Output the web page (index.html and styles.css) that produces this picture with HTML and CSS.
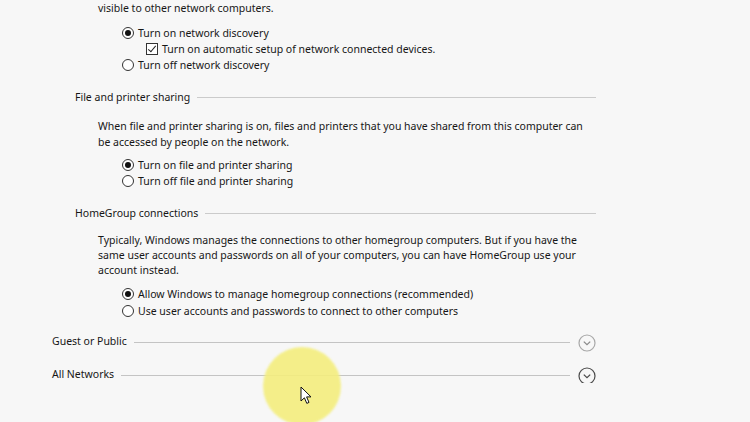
FILE: index.html
```html
<!DOCTYPE html>
<html>
<head>
  <title>Advanced sharing settings</title>
  <link rel="stylesheet" href="styles.css">
</head>
<body>
  <div class="page">
    <div class="block first">
      <p class="desc">When network discovery is on, this computer can see other network computers and devices and is<br>visible to other network computers.</p>
      <div class="options">
        <label class="opt"><span class="radio on"></span>Turn on network discovery</label>
        <label class="opt sub"><span class="check on"></span>Turn on automatic setup of network connected devices.</label>
        <label class="opt"><span class="radio"></span>Turn off network discovery</label>
      </div>
    </div>

    <div class="block">
      <div class="head">File and printer sharing</div>
      <p class="desc">When file and printer sharing is on, files and printers that you have shared from this computer can<br>be accessed by people on the network.</p>
      <div class="options">
        <label class="opt"><span class="radio on"></span>Turn on file and printer sharing</label>
        <label class="opt"><span class="radio"></span>Turn off file and printer sharing</label>
      </div>
    </div>

    <div class="block homegroup">
      <div class="head">HomeGroup connections</div>
      <p class="desc tight">Typically, Windows manages the connections to other homegroup computers. But if you have the<br>same user accounts and passwords on all of your computers, you can have HomeGroup use your<br>account instead.</p>
      <div class="options">
        <label class="opt"><span class="radio on"></span>Allow Windows to manage homegroup connections (recommended)</label>
        <label class="opt"><span class="radio"></span>Use user accounts and passwords to connect to other computers</label>
      </div>
    </div>

    <div class="profile">
      <span class="profile-name">Guest or Public</span>
      <span class="rule"></span>
      <svg class="expand" width="18" height="18" viewBox="0 0 18 18">
        <circle cx="9" cy="9" r="8" fill="none" stroke="#a8a8a8" stroke-width="1.2"/>
        <path d="M5.8 7.6 L9 10.6 L12.2 7.6" fill="none" stroke="#8a8a8a" stroke-width="1.3"/>
      </svg>
    </div>
    <div class="profile last">
      <span class="profile-name">All Networks</span>
      <span class="rule"></span>
      <svg class="expand" width="18" height="18" viewBox="0 0 18 18">
        <circle cx="9" cy="9" r="8" fill="none" stroke="#4a4a4a" stroke-width="1.2"/>
        <path d="M5.8 7.6 L9 10.6 L12.2 7.6" fill="none" stroke="#4a4a4a" stroke-width="1.3"/>
      </svg>
    </div>
  </div>

  <div class="highlight"></div>
  <svg class="cursor" width="14" height="20" viewBox="0 0 14 20">
    <path d="M1 1 L1 15 L4.4 11.8 L6.8 17.4 L9 16.4 L6.6 10.9 L11 10.9 Z" fill="#fff" stroke="#111" stroke-width="1" stroke-linejoin="round"/>
  </svg>
</body>
</html>
```

FILE: styles.css
```css
body {
  margin: 0;
  background-color: #f7f7f7;
  font-family: "Noto Sans", "Open Sans", sans-serif;
  font-size: 10.5px;
  color: #161616;
  overflow: hidden;
}

.page {
  width: 544px;
  margin-top: -16px;
  padding-left: 52px;
}

.block {
  padding-left: 23px;
}

.head {
  display: flex;
  align-items: center;
  height: 16px;
  line-height: 16px;
  margin-top: 16px;
}

.head::after {
  content: "";
  flex: 1;
  margin-left: 7px;
  border-top: 1px solid #cbcbcb;
}

.desc {
  margin: 13px 0 0 23px;
  line-height: 16px;
}

.first .desc {
  margin-top: 0;
}

.desc.tight {
  margin-top: 12px;
  line-height: 15px;
}

.options {
  margin: 7px 0 0 47px;
}

.first .options {
  margin-top: 9px;
}

.homegroup .options {
  margin-top: 8px;
}

.opt {
  display: flex;
  align-items: center;
  height: 16px;
}

.homegroup .opt + .opt {
  margin-top: 1px;
}

.opt.sub {
  margin-left: 24px;
}

.radio {
  width: 10px;
  height: 10px;
  border: 1px solid #333;
  border-radius: 50%;
  background: #fff;
  margin-right: 4px;
  position: relative;
  flex-shrink: 0;
}

.radio.on::after {
  content: "";
  position: absolute;
  left: 2px;
  top: 2px;
  width: 6px;
  height: 6px;
  border-radius: 50%;
  background: #111;
}

.check {
  width: 10px;
  height: 10px;
  border: 1px solid #333;
  background: #fff;
  margin-right: 4px;
  position: relative;
  flex-shrink: 0;
}

.check.on::after {
  content: "";
  position: absolute;
  left: 3px;
  top: 0px;
  width: 3px;
  height: 7px;
  border: solid #222;
  border-width: 0 1.5px 1.5px 0;
  transform: rotate(40deg);
}

.profile {
  display: flex;
  align-items: center;
  height: 18px;
  margin-top: 13px;
}

.profile.last {
  margin-top: 15px;
}

.rule {
  flex: 1;
  border-top: 1px solid #c4c4c4;
  margin: 3px 8px 0 7px;
}

.expand {
  flex-shrink: 0;
  margin-top: 3px;
}

.highlight {
  position: absolute;
  left: 263px;
  top: 347px;
  width: 78px;
  height: 78px;
  border-radius: 50%;
  background: #f4ee7e;
  opacity: 0.9;
  filter: blur(1px);
}

.cursor {
  position: absolute;
  left: 300px;
  top: 386px;
}
```
